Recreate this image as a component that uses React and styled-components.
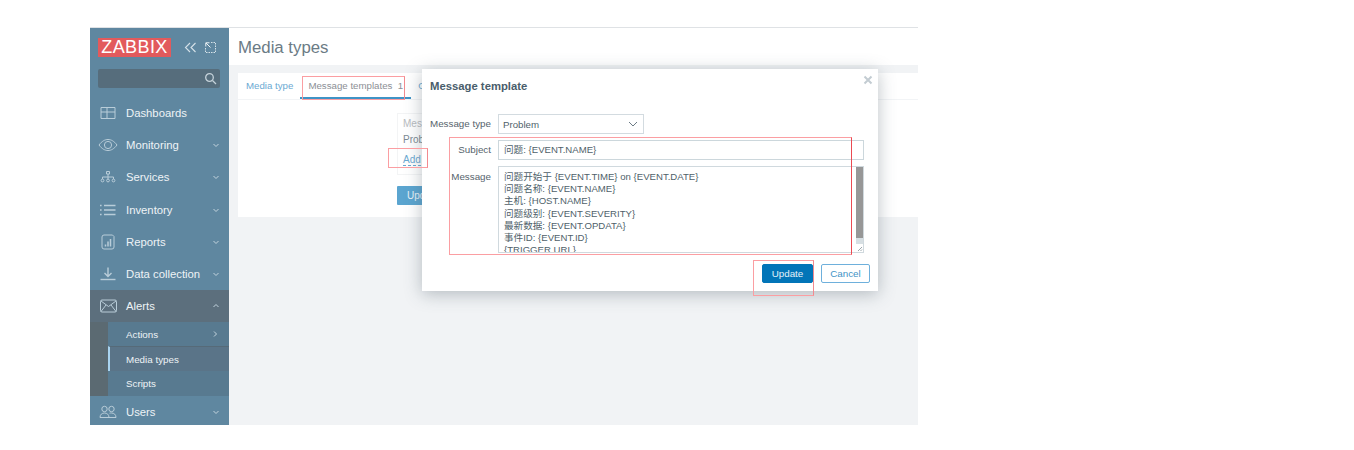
import styled, { createGlobalStyle } from "styled-components";

const GlobalStyle = createGlobalStyle`
  html, body {
    margin: 0;
    background: #fff;
    font-family: "Liberation Sans", "Noto Sans CJK SC", sans-serif;
  }
`;

const Icon = ({ children, w = 18, h = 18, vb = "0 0 18 18" }) => (
  <svg width={w} height={h} viewBox={vb} fill="none" stroke="#b9cdd9" strokeWidth="1">
    {children}
  </svg>
);

const icons = {
  dashboards: (
    <Icon>
      <path d="M2 3.500h14v11H2zM8 3.500v11M8 8h8M2 8h6" />
    </Icon>
  ),
  monitoring: (
    <Icon w={20} vb="0 0 20 18">
      <path d="M1 9c3-4 6-5.500 9-5.500S16 5 19 9c-3 4-6 5.500-9 5.500S4 13 1 9z" />
      <circle cx="10" cy="9" r="3.600" />
    </Icon>
  ),
  services: (
    <Icon w={16} h={16} vb="0 0 16 16">
      <path d="M6.500 2.500h3v2.500h-3zM8 5v3M2.500 10V8h11v2M8 8v2" />
      <circle cx="2.500" cy="11.500" r="1.400" />
      <circle cx="8" cy="11.500" r="1.400" />
      <circle cx="13.500" cy="11.500" r="1.400" />
    </Icon>
  ),
  inventory: (
    <Icon>
      <path d="M5 4.500h11.500M5 9h11.500M5 13.500h11.500" strokeWidth="1.600" />
      <path d="M1 4.500h1.600M1 9h1.600M1 13.500h1.600" strokeWidth="1.600" />
    </Icon>
  ),
  reports: (
    <Icon>
      <path d="M5 2h8.500l1.500 1.500V14a2 2 0 0 1-2 2H5a2 2 0 0 1-2-2V4a2 2 0 0 1 2-2z" />
      <path d="M6.500 13.500v-2M9 13.500V8.500M11.500 13.500V6" strokeWidth="1.500" />
    </Icon>
  ),
  data: (
    <Icon>
      <path d="M9 2.500v8.500M5.500 8l3.500 3.500L12.500 8" strokeWidth="1.400" />
      <path d="M1.500 14.500h15" strokeWidth="1.400" />
    </Icon>
  ),
  alerts: (
    <Icon w={17} h={14} vb="0 0 17 14">
      <rect x="0.500" y="1" width="16" height="12" rx="1.500" />
      <path d="M1 2l7.500 5.500L16 2M1 12.500l5-6.500M16 12.500l-5-6.500" />
    </Icon>
  ),
  users: (
    <Icon>
      <circle cx="5.500" cy="6" r="2.700" />
      <circle cx="12.500" cy="6" r="2.700" />
      <path d="M1 14.500c0-3 2-4.500 4.500-4.500S10 11.500 10 14.500zM10.500 10.200c.6-.2 1.300-.2 2-.2 2.500 0 4.500 1.500 4.500 4.500h-7" />
    </Icon>
  ),
};

const Chevron = ({ dir = "down" }) => {
  const d = {
    down: "M1.500 3l2.500 2.500L6.500 3",
    up: "M1.500 5L4 2.500 6.500 5",
    right: "M3 1.500L5.500 4 3 6.500",
  }[dir];
  return (
    <svg width="8" height="8" viewBox="0 0 8 8" fill="none" stroke="#c3d4de" strokeWidth="1">
      <path d={d} />
    </svg>
  );
};

const Frame = styled.div`
  position: relative;
  display: flex;
  width: 828px;
  height: 398px;
  margin: 27px 0 0 90px;
  overflow: hidden;
  background: #f1f3f5;
  border-top: 1px solid #dfe2e5;
  box-sizing: border-box;
`;

const Sidebar = styled.aside`
  width: 139px;
  flex: none;
  background: #5f87a0;
`;

const LogoRow = styled.div`
  display: flex;
  align-items: center;
  height: 19px;
  padding: 10px 0 0 8px;
`;

const Logo = styled.div`
  width: 73px;
  height: 19px;
  background: #e25a5c;
  color: #fff;
  font-size: 18px;
  line-height: 19px;
  text-align: center;
  letter-spacing: 0.4px;
`;

const LogoTools = styled.div`
  display: flex;
  align-items: center;
  gap: 8px;
  margin-left: 13px;
`;

const Search = styled.div`
  display: flex;
  align-items: center;
  justify-content: flex-end;
  box-sizing: border-box;
  width: 122px;
  height: 19px;
  margin: 12px 0 9px 8px;
  padding-right: 3px;
  background: #566d7c;
  border-radius: 2px;
`;

const NavRow = styled.div`
  display: flex;
  align-items: center;
  height: 32.200px;
  padding: 0 9px 0 8px;
  background: ${(p) => (p.$open ? "#5c6f7d" : "transparent")};
  color: #eef3f6;
  font-size: 11.300px;
`;

const NavIcon = styled.span`
  display: flex;
  justify-content: center;
  width: 20px;
  margin-right: 8px;
`;

const NavLabel = styled.span`
  flex: 1;
`;

const SubMenu = styled.div`
  background: #5b6a72;
  padding-left: 18px;
`;

const SubRow = styled.div`
  display: flex;
  align-items: center;
  justify-content: space-between;
  box-sizing: border-box;
  height: ${(p) => p.$h}px;
  padding: 0 10px 0 ${(p) => (p.$active ? "16px" : "18px")};
  background: ${(p) => (p.$active ? "#5a7488" : "#587a90")};
  border-left: ${(p) => (p.$active ? "2px solid #a9d4f0" : "0")};
  border-top: ${(p) => (p.$active ? "1px solid #566a78" : "0")};
  color: #eef3f6;
  font-size: 9.800px;
`;

const Main = styled.main`
  flex: 1;
  min-width: 0;
`;

const PageHeader = styled.header`
  height: 37px;
  padding-left: 9px;
  background: #fff;
  color: #6b7b85;
  font-size: 16.800px;
  line-height: 39px;
`;

const Card = styled.section`
  height: 144px;
  margin: 8px 0 0 9px;
  background: #fff;
`;

const Tabs = styled.div`
  display: flex;
  height: 26px;
  padding-left: 1px;
  border-bottom: 1px solid #f2f4f6;
`;

const Tab = styled.div`
  box-sizing: border-box;
  height: 26px;
  padding: 0 ${(p) => (p.$active ? 8 : 7)}px;
  border-bottom: 2px solid ${(p) => (p.$active ? "#3f93c6" : "transparent")};
  color: ${(p) => (p.$active ? "#8c8f95" : "#6ba9d2")};
  font-size: 9.700px;
  line-height: 25px;
  white-space: nowrap;
`;

const TemplateBox = styled.div`
  box-sizing: border-box;
  width: 120px;
  height: 62px;
  margin: 13px 0 0 159px;
  padding: 3px 0 0 5px;
  border: 1px solid #f3f4f5;
  font-size: 10px;
`;

const BoxHead = styled.div`
  height: 16px;
  color: #b9bcbf;
  line-height: 13px;
`;

const BoxCell = styled.div`
  height: 21px;
  color: #7c8a93;
  line-height: 14px;
`;

const AddLink = styled.span`
  color: #6ba9d2;
  border-bottom: 1px dashed #6ba9d2;
`;

const GhostButton = styled.div`
  width: 60px;
  height: 19px;
  margin: 11px 0 0 159px;
  padding-left: 10px;
  background: #5ba5d0;
  color: #e8f3f9;
  font-size: 10px;
  line-height: 19px;
  border-radius: 1px;
`;

const Modal = styled.div`
  position: absolute;
  left: 332px;
  top: 41px;
  box-sizing: border-box;
  width: 456px;
  height: 222px;
  padding: 10px 8px 0;
  background: #fff;
  box-shadow: 0 3px 16px rgba(80, 95, 105, 0.38);
`;

const CloseButton = styled.svg`
  position: absolute;
  top: 6px;
  right: 5px;
`;

const ModalTitle = styled.h3`
  margin: 0 0 21px;
  color: #495d6b;
  font-size: 11.300px;
  font-weight: 700;
  line-height: 14px;
`;

const Form = styled.div`
  display: grid;
  grid-template-columns: 61px 366px;
  column-gap: 7px;
  row-gap: 6px;
  align-items: start;
`;

const FieldLabel = styled.label`
  color: #56636c;
  font-size: 9.800px;
  line-height: ${(p) => p.$lh || 19}px;
  text-align: right;
  white-space: nowrap;
`;

const Select = styled.div`
  display: flex;
  align-items: center;
  justify-content: space-between;
  box-sizing: border-box;
  width: 146px;
  height: 20px;
  padding: 0 5px 0 4px;
  border: 1px solid #d3dbe0;
  color: #4f5f6a;
  font-size: 9.700px;
`;

const Input = styled.div`
  box-sizing: border-box;
  height: 20px;
  padding: 0 5px;
  border: 1px solid #ccd7dc;
  color: #4f5f6a;
  font-size: 9.600px;
  line-height: 18px;
`;

const TextArea = styled.div`
  position: relative;
  box-sizing: border-box;
  height: 87px;
  padding: 4px 5px 0;
  overflow: hidden;
  border: 1px solid #d0d9de;
  color: #4f5f6a;
  font-size: 9.600px;
  line-height: 12.200px;
  white-space: nowrap;
`;

const ScrollTrack = styled.div`
  position: absolute;
  top: 0;
  right: 0;
  bottom: 0;
  width: 7px;
  background: #d7dfe3;
`;

const ScrollThumb = styled.div`
  height: 71px;
  background: #979797;
`;

const ResizeGrip = styled.svg`
  position: absolute;
  right: 0;
  bottom: 0;
  background: #fff;
`;

const Footer = styled.div`
  display: flex;
  justify-content: flex-end;
  gap: 8px;
  margin-top: 11px;
`;

const Button = styled.div`
  box-sizing: border-box;
  width: ${(p) => p.$w}px;
  height: 19px;
  border: 1px solid ${(p) => (p.$primary ? "#0275b8" : "#6eb0dc")};
  border-radius: 2px;
  background: ${(p) => (p.$primary ? "#0275b8" : "#fff")};
  color: ${(p) => (p.$primary ? "#e4f1f8" : "#3f93c6")};
  font-size: 9.800px;
  line-height: 17px;
  text-align: center;
`;

const Mark = styled.div`
  position: absolute;
  left: ${(p) => p.$x - 90}px;
  top: ${(p) => p.$y - 28}px;
  box-sizing: border-box;
  width: ${(p) => p.$w}px;
  height: ${(p) => p.$h}px;
  border: 1px solid #fb9ea2;
  border-right-color: ${(p) => (p.$strong ? "#ea4a52" : "#f28a8f")};
  pointer-events: none;
`;

const nav = [
  ["dashboards", "Dashboards", null],
  ["monitoring", "Monitoring", "down"],
  ["services", "Services", "down"],
  ["inventory", "Inventory", "down"],
  ["reports", "Reports", "down"],
  ["data", "Data collection", "down"],
];

const messageLines = [
  "问题开始于 {EVENT.TIME} on {EVENT.DATE}",
  "问题名称: {EVENT.NAME}",
  "主机: {HOST.NAME}",
  "问题级别: {EVENT.SEVERITY}",
  "最新数据: {EVENT.OPDATA}",
  "事件ID: {EVENT.ID}",
  "{TRIGGER.URL}",
];

export default function App() {
  return (
    <>
      <GlobalStyle />
      <Frame>
        <Sidebar>
          <LogoRow>
            <Logo>ZABBIX</Logo>
            <LogoTools>
              <svg width="13" height="11" viewBox="0 0 13 11" fill="none" stroke="#d5e1e8" strokeWidth="1.100">
                <path d="M6 1L1.500 5.500 6 10M11.500 1L7 5.500l4.500 4.500" />
              </svg>
              <svg width="11" height="11" viewBox="0 0 11 11" fill="none" stroke="#d5e1e8" strokeWidth="1">
                <path d="M6 .5h4.500v10H.5V6" strokeDasharray="1.500 1" />
                <path d="M1 1l4.500 4.500M.8 4.500V.8h3.700" stroke="#eef3f6" />
              </svg>
            </LogoTools>
          </LogoRow>
          <Search>
            <svg width="13" height="13" viewBox="0 0 13 13" fill="none" stroke="#c5d2da" strokeWidth="1.300">
              <circle cx="5.500" cy="5.500" r="3.800" />
              <path d="M8.500 8.500l3.500 3.500" />
            </svg>
          </Search>
          {nav.map(([icon, label, dir]) => (
            <NavRow key={label}>
              <NavIcon>{icons[icon]}</NavIcon>
              <NavLabel>{label}</NavLabel>
              {dir && <Chevron dir={dir} />}
            </NavRow>
          ))}
          <NavRow $open>
            <NavIcon>{icons.alerts}</NavIcon>
            <NavLabel>Alerts</NavLabel>
            <Chevron dir="up" />
          </NavRow>
          <SubMenu>
            <SubRow $h={24}>
              Actions <Chevron dir="right" />
            </SubRow>
            <SubRow $h={25} $active>
              Media types
            </SubRow>
            <SubRow $h={25}>Scripts</SubRow>
          </SubMenu>
          <NavRow>
            <NavIcon>{icons.users}</NavIcon>
            <NavLabel>Users</NavLabel>
            <Chevron />
          </NavRow>
        </Sidebar>
        <Main>
          <PageHeader>Media types</PageHeader>
          <Card>
            <Tabs>
              <Tab>Media type</Tab>
              <Tab $active>Message templates&nbsp; 1</Tab>
              <Tab>Options</Tab>
            </Tabs>
            <TemplateBox>
              <BoxHead>Message type</BoxHead>
              <BoxCell>Problem</BoxCell>
              <AddLink>Add</AddLink>
            </TemplateBox>
            <GhostButton>Update</GhostButton>
          </Card>
        </Main>
        <Modal>
          <CloseButton width="10" height="10" viewBox="0 0 10 10" fill="none" stroke="#c3ccd2" strokeWidth="2">
            <path d="M1.500 1.500l7 7M8.500 1.500l-7 7" />
          </CloseButton>
          <ModalTitle>Message template</ModalTitle>
          <Form>
            <FieldLabel>Message type</FieldLabel>
            <Select>
              Problem
              <svg width="10" height="6" viewBox="0 0 10 6" fill="none" stroke="#6b7b85" strokeWidth="1">
                <path d="M1 1l4 4 4-4" />
              </svg>
            </Select>
            <FieldLabel>Subject</FieldLabel>
            <Input>问题: {"{EVENT.NAME}"}</Input>
            <FieldLabel $lh={21}>Message</FieldLabel>
            <TextArea>
              {messageLines.map((line) => (
                <div key={line}>{line}</div>
              ))}
              <ScrollTrack>
                <ScrollThumb />
              </ScrollTrack>
              <ResizeGrip width="7" height="8" viewBox="0 0 7 8" fill="none" stroke="#9aa5ab" strokeWidth="1">
                <path d="M6 3L2 7M6 5.500L4.500 7" />
              </ResizeGrip>
            </TextArea>
          </Form>
          <Footer>
            <Button $primary $w={51}>
              Update
            </Button>
            <Button $w={49}>Cancel</Button>
          </Footer>
        </Modal>
        <Mark $x={302} $y={76} $w={103} $h={24} />
        <Mark $x={388} $y={148} $w={40} $h={20} />
        <Mark $x={449} $y={137} $w={403} $h={118} $strong />
        <Mark $x={753} $y={260} $w={61} $h={36} />
      </Frame>
    </>
  );
}
